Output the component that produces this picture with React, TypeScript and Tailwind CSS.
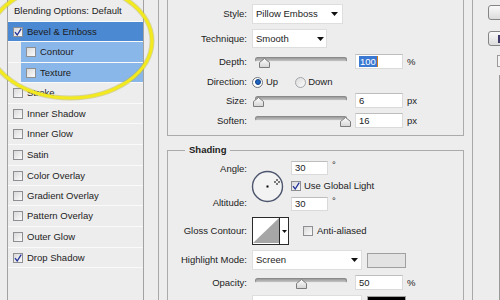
import React from 'react';

const Check = () => (
  <svg width="8" height="8" viewBox="0 0 8 8">
    <path d="M1 4.2 L3.2 7 L7.2 0.6" fill="none" stroke="#24349a" strokeWidth="1.3" />
  </svg>
);

const Box: React.FC<{ checked?: boolean }> = ({ checked }) => (
  <span className="w-[10px] h-[10px] shrink-0 border border-[#8d8f92] bg-linear-to-br from-[#d9d9d9] to-[#fbfbfb] flex items-center justify-center">
    {checked && <Check />}
  </span>
);

const Arrow = () => (
  <svg width="7" height="4" viewBox="0 0 7 4">
    <polygon points="0,0 7,0 3.5,4" fill="#111" />
  </svg>
);

const Thumb = () => (
  <svg width="11" height="10" viewBox="0 0 11 10">
    <defs>
      <linearGradient id="tg" x1="0" y1="0" x2="0" y2="1">
        <stop offset="0" stopColor="#ffffff" />
        <stop offset="1" stopColor="#d4d4d4" />
      </linearGradient>
    </defs>
    <path d="M0.5 9.5 V4.5 L5.5 0.5 L10.5 4.5 V9.5 Z" fill="url(#tg)" stroke="#7c7c7c" />
  </svg>
);

const Slider: React.FC<{ pos: number }> = ({ pos }) => (
  <div className="relative w-[103px] h-full shrink-0">
    <div className="ml-[3px] mt-[3px] w-[92px] h-[5px] rounded-full bg-linear-to-b from-[#9a9a9a] to-[#c4c4c4] border border-[#8a8a8a] border-b-[#e8e8e8]" />
    <div className="absolute top-[4px]" style={{ left: pos - 2 }}>
      <Thumb />
    </div>
  </div>
);

const Field: React.FC<{ children?: React.ReactNode; w?: string }> = ({ children, w = 'w-[48px] h-[15px]' }) => (
  <div className={`${w} shrink-0 bg-white border border-[#dadada] border-t-[#bdbdbd] flex items-center pl-[3px]`}>
    {children}
  </div>
);

const Select: React.FC<{ text: string; cls: string }> = ({ text, cls }) => (
  <div className={`${cls} shrink-0 bg-white border border-[#dedede] flex items-center justify-between pl-[3px]`}>
    <span>{text}</span>
    <Arrow />
  </div>
);

const Label: React.FC<{ children?: React.ReactNode }> = ({ children }) => (
  <span className="w-[79px] shrink-0 text-right mr-[5px]">{children}</span>
);

const rows = [
  { label: 'Blending Options: Default', h: 'h-[22px]', kind: 'head' },
  { label: 'Bevel & Emboss', h: 'h-[20px]', kind: 'dark', checked: true },
  { label: 'Contour', h: 'h-[21px]', kind: 'light' },
  { label: 'Texture', h: 'h-[20px]', kind: 'light' },
  { label: 'Stroke', h: 'h-[21px]' },
  { label: 'Inner Shadow', h: 'h-[20px]' },
  { label: 'Inner Glow', h: 'h-[21px]' },
  { label: 'Satin', h: 'h-[21px]' },
  { label: 'Color Overlay', h: 'h-[20px]' },
  { label: 'Gradient Overlay', h: 'h-[20px]' },
  { label: 'Pattern Overlay', h: 'h-[21px]' },
  { label: 'Outer Glow', h: 'h-[21px]' },
  { label: 'Drop Shadow', h: 'h-[20px]', checked: true },
];

const StylesList = () => (
  <div className="ml-[7px] w-[137px] h-full shrink-0 border-x border-[#a2a2a2]">
    {rows.map((r) => {
      if (r.kind === 'head')
        return (
          <div key={r.label} className={`${r.h} flex items-center pl-[6px] border-b border-[#fafafa]`}>
            {r.label}
          </div>
        );
      if (r.kind === 'light')
        return (
          <div key={r.label} className={`${r.h} flex border-b border-[#fafafa]`}>
            <div className="ml-[13px] flex-1 bg-[#8ab7e9] flex items-center gap-[4px] pl-[5px]">
              <Box />
              <span>{r.label}</span>
            </div>
          </div>
        );
      return (
        <div
          key={r.label}
          className={`${r.h} flex items-center gap-[4px] pl-[5px] border-b border-[#fafafa] ${r.kind === 'dark' ? 'bg-[#4b89d3]' : ''}`}
        >
          <Box checked={r.checked} />
          <span>{r.label}</span>
        </div>
      );
    })}
  </div>
);

const Structure = () => (
  <div className="h-[136px] border-x border-b border-[#ababab] pt-[4px]">
    <div className="flex items-center h-[20px]">
      <Label>Style:</Label>
      <Select text="Pillow Emboss" cls="w-[91px] h-[20px] pr-[4px]" />
    </div>
    <div className="flex items-center h-[19px] mt-[5px]">
      <Label>Technique:</Label>
      <Select text="Smooth" cls="w-[75px] h-[19px] pr-[2px]" />
    </div>
    <div className="flex items-center h-[15px] mt-[6px]">
      <Label>Depth:</Label>
      <Slider pos={9} />
      <Field>
        <span className="bg-[#3b78d2] text-white px-[1px] leading-[11px]">100</span>
        <span className="w-px h-[11px] bg-[#d07a20]" />
      </Field>
      <span className="ml-[4px]">%</span>
    </div>
    <div className="flex items-center h-[16px] mt-[5px]">
      <Label>Direction:</Label>
      <span className="w-[11px] h-[11px] rounded-full border border-[#6f7378] bg-white flex items-center justify-center">
        <span className="w-[6px] h-[6px] rounded-full bg-[#1f63c0] border border-[#0f3f85]" />
      </span>
      <span className="ml-[3px]">Up</span>
      <span className="ml-[17px] w-[11px] h-[11px] rounded-full border border-[#a3a6aa] bg-linear-to-br from-[#dcdcdc] to-[#fbfbfb]" />
      <span className="ml-[2px]">Down</span>
    </div>
    <div className="flex items-center h-[15px] mt-[3px]">
      <Label>Size:</Label>
      <Slider pos={3} />
      <Field>6</Field>
      <span className="ml-[4px]">px</span>
    </div>
    <div className="flex items-center h-[15px] mt-[5px]">
      <Label>Soften:</Label>
      <Slider pos={90} />
      <Field>16</Field>
      <span className="ml-[4px]">px</span>
    </div>
  </div>
);

const AngleDial = () => (
  <svg width="33" height="33" viewBox="0 0 33 33" className="ml-[4px] mt-[9px] shrink-0">
    <circle cx="16.5" cy="17" r="15" fill="#d8d8d8" opacity="0.6" />
    <circle cx="16.5" cy="16.5" r="15" fill="#f3f3f3" stroke="#4d566e" strokeWidth="1.4" />
    <rect x="15.5" y="15.5" width="2" height="2" fill="#000" />
    <path d="M26 9 V11 M26 13 V15 M23 12 H25 M27 12 H29" stroke="#000" strokeWidth="1" />
  </svg>
);

const Deg = () => <span className="ml-[4px] leading-[8px] text-[#222]">°</span>;

const Shading = () => (
  <fieldset className="mt-[8px] border border-[#ababab] pt-[5px] pb-[20px]">
    <legend className="ml-[17px] px-[4px] font-bold leading-[12px]">Shading</legend>
    <div className="flex h-[50px]">
      <div className="w-[79px] shrink-0 flex flex-col justify-between text-right py-[2px] leading-[12px]">
        <span>Angle:</span>
        <span>Altitude:</span>
      </div>
      <AngleDial />
      <div className="ml-[7px] flex flex-col">
        <div className="flex h-[14px]">
          <Field w="w-[37px] h-[14px]">30</Field>
          <Deg />
        </div>
        <div className="flex items-center h-[11px] mt-[5px]">
          <Box checked />
          <span className="ml-[3px]">Use Global Light</span>
        </div>
        <div className="flex h-[14px] mt-[6px]">
          <Field w="w-[37px] h-[14px]">30</Field>
          <Deg />
        </div>
      </div>
    </div>
    <div className="flex items-center h-[28px] mt-[6px]">
      <Label>Gloss Contour:</Label>
      <div className="w-[37px] h-[28px] shrink-0 border-[1.5px] border-[#2a2a2a] bg-white flex">
        <svg width="26" height="25" viewBox="0 0 26 25" className="shrink-0">
          <polygon points="0,25 26,0 26,25" fill="#a6a6a6" />
        </svg>
        <div className="flex-1 border-l border-[#2a2a2a] flex items-center justify-center">
          <svg width="5" height="3" viewBox="0 0 5 3">
            <polygon points="0,0 5,0 2.5,3" fill="#111" />
          </svg>
        </div>
      </div>
      <span className="ml-[14px]">
        <Box />
      </span>
      <span className="ml-[4px]">Anti-aliased</span>
    </div>
    <div className="flex items-center h-[20px] mt-[5px]">
      <Label>Highlight Mode:</Label>
      <Select text="Screen" cls="w-[110px] h-[20px] pr-[3px]" />
      <span className="ml-[5px] w-[39px] h-[15px] bg-[#e3e3e3] border border-[#a0a0a0]" />
    </div>
    <div className="flex items-center h-[15px] mt-[5px]">
      <Label>Opacity:</Label>
      <Slider pos={46} />
      <Field>50</Field>
      <span className="ml-[4px]">%</span>
    </div>
    <div className="flex items-start h-[20px] mt-[5px]">
      <Label />
      <div className="w-[110px] h-[20px] shrink-0 bg-white border border-[#dedede]" />
      <span className="ml-[5px] mt-[1px] w-[39px] h-[15px] bg-black border border-[#a0a0a0]" />
    </div>
  </fieldset>
);

const RightStrip = () => (
  <div className="flex-1 pl-[15px] pt-[5px] flex flex-col">
    <div className="w-[30px] h-[15px] rounded-[3px] border border-[#858585] bg-linear-to-b from-[#fafafa] to-[#dcdcdc]" />
    <div className="mt-[11px] w-[30px] h-[15px] rounded-[3px] border border-[#858585] bg-linear-to-b from-[#fafafa] to-[#dcdcdc] pl-[9px] pt-[3px]">
      <div className="w-[4px] h-[8px] bg-[#3f3a6a]" />
    </div>
    <div className="mt-[9px] ml-[9px] w-[12px] h-[12px] border border-[#9a9a9a] bg-[#f4f4f4]" />
    <div className="mt-[8px] ml-[11px] flex-1 w-[20px] border-l border-t border-[#9a9a9a] bg-[#f2f2f2]" />
  </div>
);

export default function App() {
  return (
    <div className="relative w-[500px] h-[300px] overflow-hidden bg-[#ededed] text-[#1c1c1c] text-[9.5px] leading-[12px] font-['Liberation_Sans',Arial,sans-serif] flex">
      <StylesList />
      <div className="ml-[14px] w-[315px] h-full shrink-0 border-x border-[#a8a8a8] px-[8px]">
        <Structure />
        <Shading />
      </div>
      <RightStrip />
      <svg width="500" height="300" className="absolute left-0 top-0 pointer-events-none">
        <ellipse cx="70" cy="41" rx="82" ry="57" fill="none" stroke="#b9b33a" strokeOpacity="0.45" strokeWidth="5" />
        <ellipse cx="70" cy="41" rx="82" ry="57" fill="none" stroke="#f2ea1e" strokeWidth="3.2" />
      </svg>
    </div>
  );
}
